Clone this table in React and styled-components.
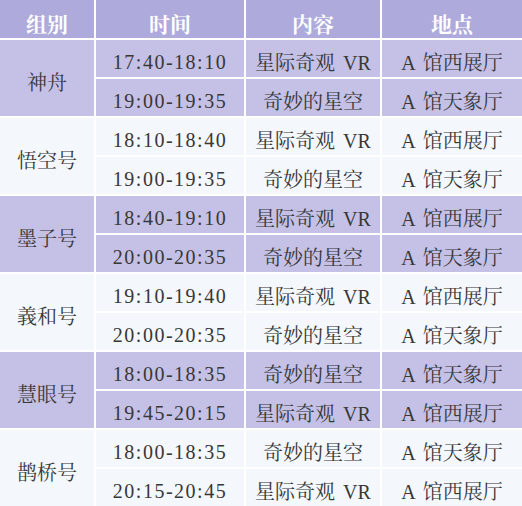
import styled, { createGlobalStyle } from "styled-components";

const GlobalStyle = createGlobalStyle`
    html, body {
        margin: 0;
        padding: 0;
        background: #ffffff;
    }
`

const groups = [
    { name: "神舟", slots: [["17:40-18:10", "星际奇观 VR", "A 馆西展厅"], ["19:00-19:35", "奇妙的星空", "A 馆天象厅"]] },
    { name: "悟空号", slots: [["18:10-18:40", "星际奇观 VR", "A 馆西展厅"], ["19:00-19:35", "奇妙的星空", "A 馆天象厅"]] },
    { name: "墨子号", slots: [["18:40-19:10", "星际奇观 VR", "A 馆西展厅"], ["20:00-20:35", "奇妙的星空", "A 馆天象厅"]] },
    { name: "義和号", slots: [["19:10-19:40", "星际奇观 VR", "A 馆西展厅"], ["20:00-20:35", "奇妙的星空", "A 馆天象厅"]] },
    { name: "慧眼号", slots: [["18:00-18:35", "奇妙的星空", "A 馆天象厅"], ["19:45-20:15", "星际奇观 VR", "A 馆西展厅"]] },
    { name: "鹊桥号", slots: [["18:00-18:35", "奇妙的星空", "A 馆天象厅"], ["20:15-20:45", "星际奇观 VR", "A 馆西展厅"]] },
];

const headers = ["组别", "时间", "内容", "地点"];

export default function App () {
    return (
        <>
            <GlobalStyle />
            <StyledTable>
                {headers.map((h) => (
                    <StyledHeadCell key={h}>{h}</StyledHeadCell>
                ))}
                {groups.map((g, gi) => {
                    const shaded = gi % 2 === 0;
                    return [
                        <StyledGroupCell key={g.name} shaded={shaded}>{g.name}</StyledGroupCell>,
                        ...g.slots.map((s, si) => [
                            <StyledTimeCell key={`${g.name}-t${si}`} shaded={shaded}>{s[0]}</StyledTimeCell>,
                            <StyledCell key={`${g.name}-c${si}`} shaded={shaded}>{s[1]}</StyledCell>,
                            <StyledCell key={`${g.name}-p${si}`} shaded={shaded}>{s[2]}</StyledCell>,
                        ]).flat(),
                    ];
                })}
            </StyledTable>
        </>
    )
}

const StyledTable = styled.div`
    display: grid;
    grid-template-columns: 94px 148px 134px 1fr;
    grid-template-rows: repeat(13, 1fr);
    gap: 2px;
    width: 522px;
    height: 506px;
    background-color: #ffffff;
    font-family: "Liberation Serif", "Noto Serif CJK SC", "Noto Sans CJK SC", serif;
    color: #383838;
`
const StyledBaseCell = styled.div`
    display: flex;
    align-items: center;
    justify-content: center;
    padding-top: 5px;
    box-sizing: border-box;
    font-size: 20px;
    background-color: ${({shaded}) => shaded ? "#c4c0e6" : "#f4f7fc"};
    white-space: nowrap;
`
const StyledHeadCell = styled(StyledBaseCell)`
    background-color: #aeaadc;
    color: #ffffff;
    font-weight: 700;
    font-size: 21px;
    padding-top: 8px;
`
const StyledGroupCell = styled(StyledBaseCell)`
    grid-row: span 2;
    padding-top: 6px;
`
const StyledTimeCell = styled(StyledBaseCell)`
    font-size: 20px;
    letter-spacing: 1.5px;
    padding-top: 7px;
`
const StyledCell = styled(StyledBaseCell)`
    padding-top: 5px;
    word-spacing: 3px;
`
